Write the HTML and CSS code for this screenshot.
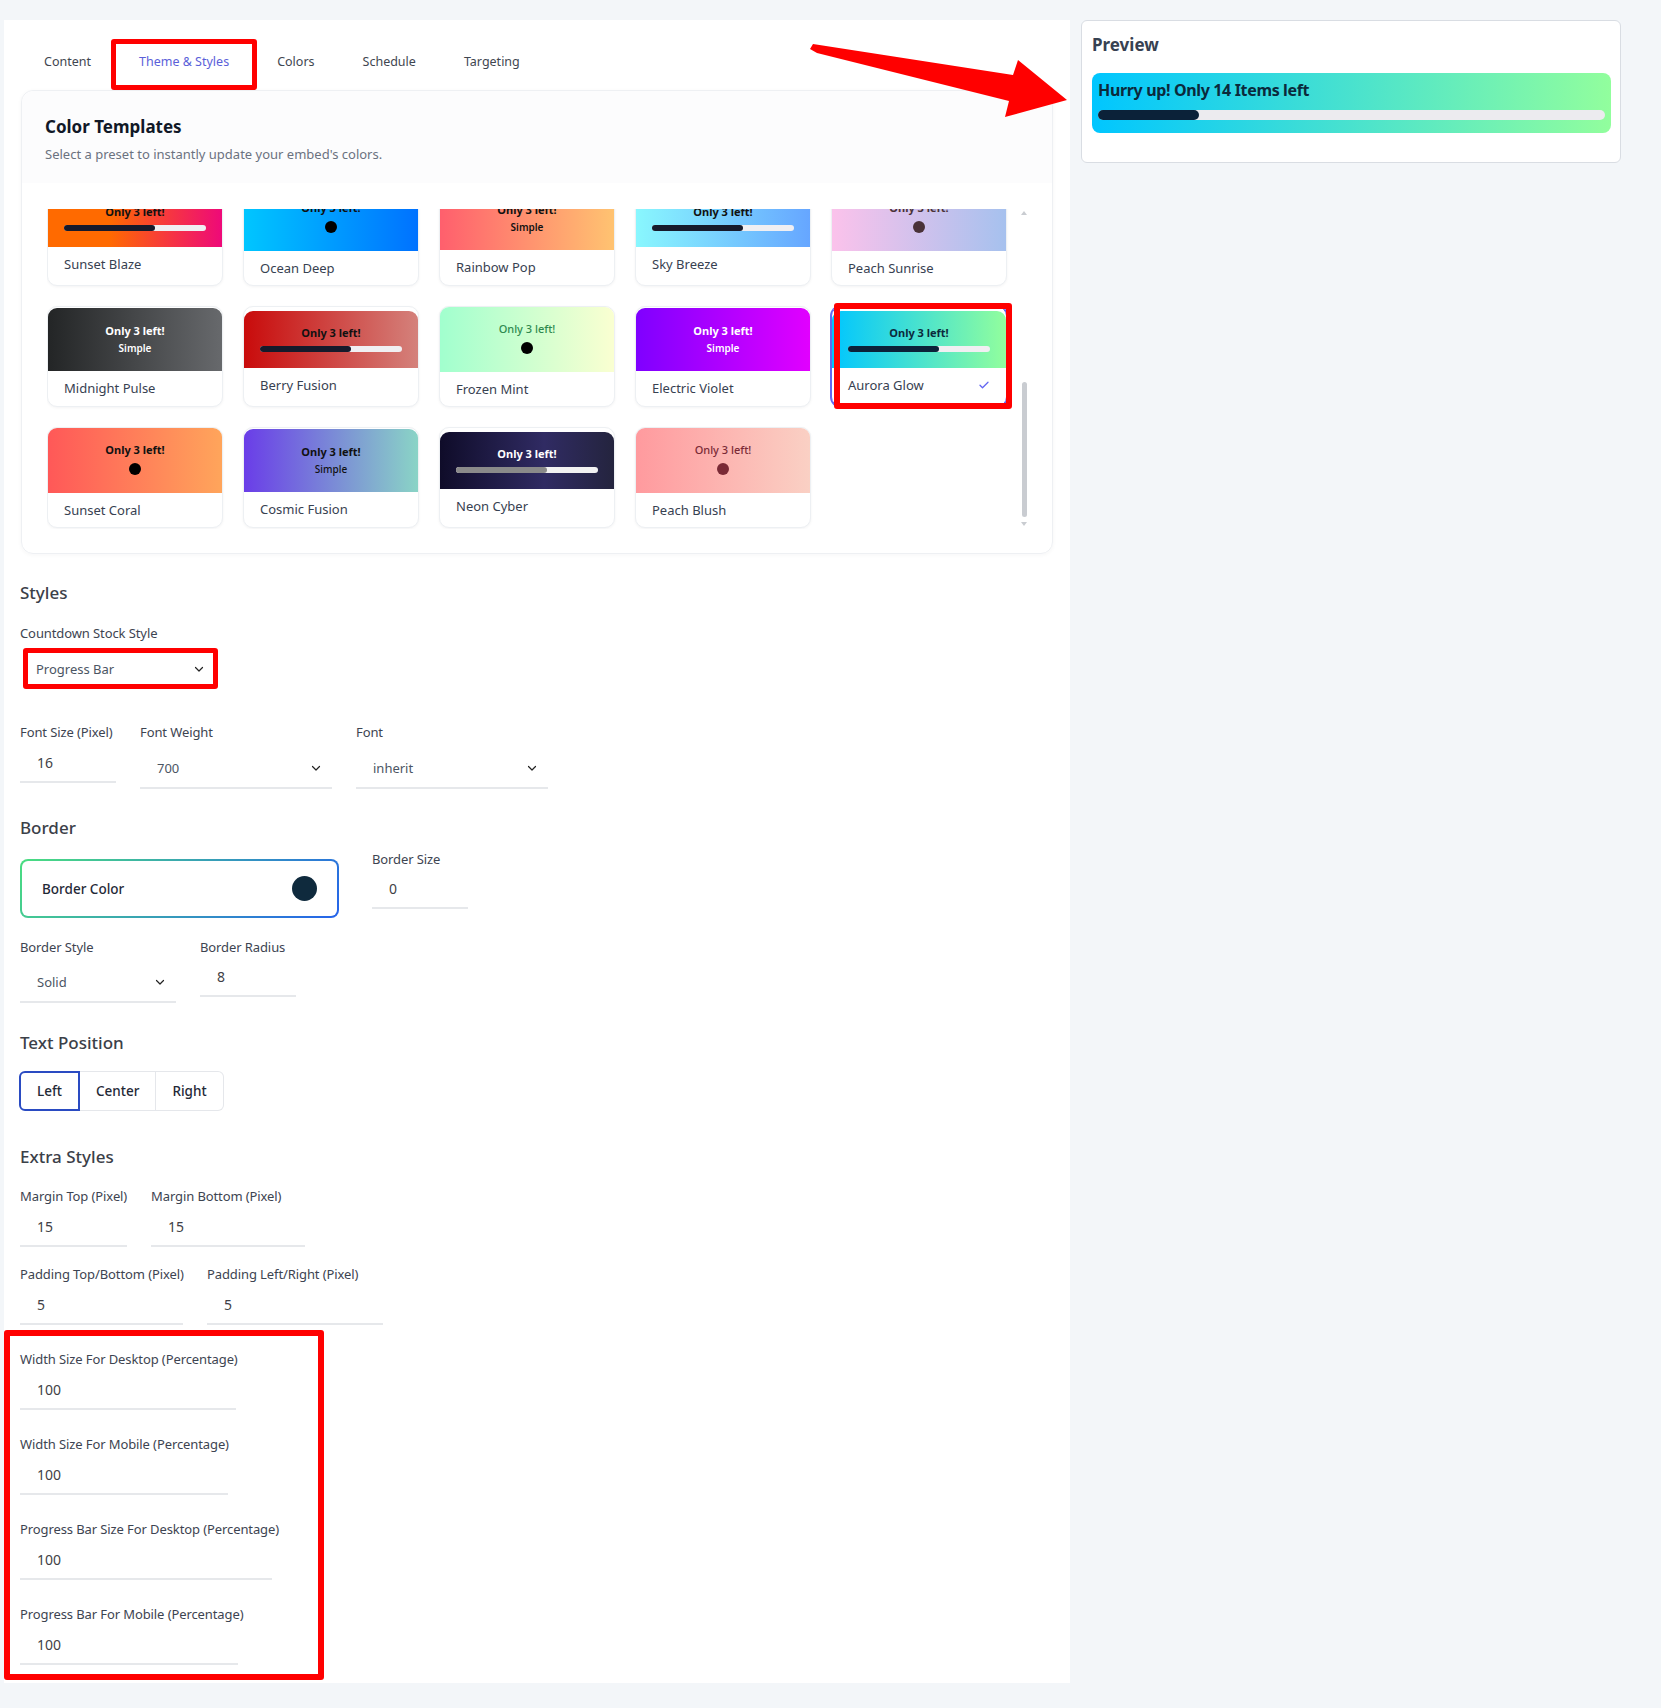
FILE: index.html
```html
<!DOCTYPE html>
<html>
<head>
    <meta charset="utf-8">
    <title>Theme &amp; Styles</title>
    <link rel="stylesheet" href="styles.css">
</head>
<body>
    <div class="page">
        <div class="panel">
            <div class="tabs">
                <div class="tab">Content</div>
                <div class="tab active callout callout-tab">Theme &amp; Styles</div>
                <div class="tab">Colors</div>
                <div class="tab">Schedule</div>
                <div class="tab">Targeting</div>
            </div>

            <div class="templates">
                <div class="templates-head">
                    <h3 class="templates-title">Color Templates</h3>
                    <p class="templates-sub">Select a preset to instantly update your embed's colors.</p>
                </div>
                <div class="tpl-wrap">
                    <div class="tpl-scroll">
                        <div class="tpl-grid">
                            <div class="tpl">
                                <div class="thumb bar t-sunset-blaze"><div class="thumb-text">Only 3 left!</div><div class="track"><div class="fill"></div></div></div>
                                <div class="tpl-name">Sunset Blaze</div>
                            </div>
                            <div class="tpl">
                                <div class="thumb dot t-ocean-deep"><div class="thumb-text">Only 3 left!</div><div class="dot-mark"></div></div>
                                <div class="tpl-name">Ocean Deep</div>
                            </div>
                            <div class="tpl">
                                <div class="thumb simple t-rainbow-pop"><div class="thumb-text">Only 3 left!</div><div class="thumb-sub">Simple</div></div>
                                <div class="tpl-name">Rainbow Pop</div>
                            </div>
                            <div class="tpl">
                                <div class="thumb bar t-sky-breeze"><div class="thumb-text">Only 3 left!</div><div class="track"><div class="fill"></div></div></div>
                                <div class="tpl-name">Sky Breeze</div>
                            </div>
                            <div class="tpl">
                                <div class="thumb dot t-peach-sunrise"><div class="thumb-text">Only 3 left!</div><div class="dot-mark"></div></div>
                                <div class="tpl-name">Peach Sunrise</div>
                            </div>

                            <div class="tpl">
                                <div class="thumb simple t-midnight"><div class="thumb-text">Only 3 left!</div><div class="thumb-sub">Simple</div></div>
                                <div class="tpl-name">Midnight Pulse</div>
                            </div>
                            <div class="tpl">
                                <div class="thumb bar t-berry"><div class="thumb-text">Only 3 left!</div><div class="track"><div class="fill"></div></div></div>
                                <div class="tpl-name">Berry Fusion</div>
                            </div>
                            <div class="tpl">
                                <div class="thumb dot t-frozen-mint"><div class="thumb-text">Only 3 left!</div><div class="dot-mark"></div></div>
                                <div class="tpl-name">Frozen Mint</div>
                            </div>
                            <div class="tpl">
                                <div class="thumb simple t-electric-violet"><div class="thumb-text">Only 3 left!</div><div class="thumb-sub">Simple</div></div>
                                <div class="tpl-name">Electric Violet</div>
                            </div>
                            <div class="tpl selected callout callout-aurora">
                                <div class="thumb bar t-aurora"><div class="thumb-text">Only 3 left!</div><div class="track"><div class="fill"></div></div></div>
                                <div class="tpl-name">Aurora Glow
                                    <svg class="check" width="12" height="12" viewBox="0 0 24 24"><path d="M4 12.5l5 5L20 6.5" fill="none" stroke="#6366f1" stroke-width="2.6" stroke-linecap="round" stroke-linejoin="round"/></svg>
                                </div>
                            </div>

                            <div class="tpl">
                                <div class="thumb dot t-sunset-coral"><div class="thumb-text">Only 3 left!</div><div class="dot-mark"></div></div>
                                <div class="tpl-name">Sunset Coral</div>
                            </div>
                            <div class="tpl">
                                <div class="thumb simple t-cosmic"><div class="thumb-text">Only 3 left!</div><div class="thumb-sub">Simple</div></div>
                                <div class="tpl-name">Cosmic Fusion</div>
                            </div>
                            <div class="tpl">
                                <div class="thumb bar t-neon-cyber"><div class="thumb-text">Only 3 left!</div><div class="track"><div class="fill"></div></div></div>
                                <div class="tpl-name">Neon Cyber</div>
                            </div>
                            <div class="tpl">
                                <div class="thumb dot t-peach-blush"><div class="thumb-text">Only 3 left!</div><div class="dot-mark"></div></div>
                                <div class="tpl-name">Peach Blush</div>
                            </div>
                        </div>
                    </div>
                    <!-- thin scrollbar drawn over the list -->
                    <div class="rail" aria-hidden="true">
                        <span class="rail-up"></span>
                        <span class="rail-thumb"></span>
                        <span class="rail-down"></span>
                    </div>
                </div>
            </div>

            <h2 class="section-title s-styles">Styles</h2>
            <div class="field-label label-stock">Countdown Stock Style</div>
            <div class="select-callout">
                <span>Progress Bar</span>
                <svg class="chev" width="12" height="12" viewBox="0 0 24 24"><path d="M5 9l7 7 7-7" fill="none" stroke="#222" stroke-width="2.4" stroke-linecap="round" stroke-linejoin="round"/></svg>
            </div>

            <div class="form-row row-font">
                <div class="field f-size">
                    <label class="field-label">Font Size (Pixel)</label>
                    <input class="line-input" type="text" value="16">
                </div>
                <div class="field f-weight">
                    <label class="field-label">Font Weight</label>
                    <div class="line-select">
                        <span>700</span>
                        <svg class="chev" width="12" height="12" viewBox="0 0 24 24"><path d="M5 9l7 7 7-7" fill="none" stroke="#222" stroke-width="2.4" stroke-linecap="round" stroke-linejoin="round"/></svg>
                    </div>
                </div>
                <div class="field f-font">
                    <label class="field-label">Font</label>
                    <div class="line-select">
                        <span>inherit</span>
                        <svg class="chev" width="12" height="12" viewBox="0 0 24 24"><path d="M5 9l7 7 7-7" fill="none" stroke="#222" stroke-width="2.4" stroke-linecap="round" stroke-linejoin="round"/></svg>
                    </div>
                </div>
            </div>

            <h2 class="section-title s-border">Border</h2>
            <div class="form-row row-border">
                <div class="color-box">
                    <span>Border Color</span>
                    <span class="swatch"></span>
                </div>
                <div class="field f-bsize">
                    <label class="field-label">Border Size</label>
                    <input class="line-input input-tight" type="text" value="0">
                </div>
            </div>
            <div class="form-row row-style">
                <div class="field f-bstyle">
                    <label class="field-label">Border Style</label>
                    <div class="line-select select-style">
                        <span>Solid</span>
                        <svg class="chev" width="12" height="12" viewBox="0 0 24 24"><path d="M5 9l7 7 7-7" fill="none" stroke="#222" stroke-width="2.4" stroke-linecap="round" stroke-linejoin="round"/></svg>
                    </div>
                </div>
                <div class="field f-bradius">
                    <label class="field-label">Border Radius</label>
                    <input class="line-input input-tight" type="text" value="8">
                </div>
            </div>

            <h2 class="section-title s-position">Text Position</h2>
            <div class="seg">
                <button class="seg-btn active">Left</button>
                <button class="seg-btn">Center</button>
                <button class="seg-btn">Right</button>
            </div>

            <h2 class="section-title s-extra">Extra Styles</h2>
            <div class="form-row row-margin">
                <div class="field f-mt">
                    <label class="field-label">Margin Top (Pixel)</label>
                    <input class="line-input" type="text" value="15">
                </div>
                <div class="field f-mb">
                    <label class="field-label">Margin Bottom (Pixel)</label>
                    <input class="line-input" type="text" value="15">
                </div>
            </div>
            <div class="form-row row-padding">
                <div class="field f-ptb">
                    <label class="field-label">Padding Top/Bottom (Pixel)</label>
                    <input class="line-input" type="text" value="5">
                </div>
                <div class="field f-plr">
                    <label class="field-label">Padding Left/Right (Pixel)</label>
                    <input class="line-input" type="text" value="5">
                </div>
            </div>

            <div class="size-group">
                <div class="field f-wd">
                    <label class="field-label">Width Size For Desktop (Percentage)</label>
                    <input class="line-input" type="text" value="100">
                </div>
                <div class="field f-wm">
                    <label class="field-label">Width Size For Mobile (Percentage)</label>
                    <input class="line-input" type="text" value="100">
                </div>
                <div class="field f-pd">
                    <label class="field-label">Progress Bar Size For Desktop (Percentage)</label>
                    <input class="line-input" type="text" value="100">
                </div>
                <div class="field f-pm">
                    <label class="field-label">Progress Bar For Mobile (Percentage)</label>
                    <input class="line-input" type="text" value="100">
                </div>
            </div>
        </div>

        <div class="preview">
            <h3 class="preview-title">Preview</h3>
            <div class="stock-bar">
                <div class="stock-text">Hurry up! Only 14 Items left</div>
                <div class="stock-track"><div class="stock-fill"></div></div>
            </div>
        </div>
    </div>

    <!-- annotation arrow pointing at the preview -->
    <svg class="arrow" width="1661" height="140" viewBox="0 0 1661 140">
        <polygon points="813,44 1013,75 1018,60 1067,100 1005,117 1009,101 817,53 810,49" fill="#ff0000"/>
    </svg>

    <script src="script.js"></script>
</body>
</html>
```

FILE: styles.css
```css
* {
    box-sizing: border-box;
}
body {
    margin: 0;
    background: #f3f6f9;
    font-family: "Noto Sans", "Open Sans", sans-serif;
    color: #3d4451;
    position: relative;
}
.page {
    display: flex;
    align-items: flex-start;
    gap: 11px;
    padding: 20px 0 0 4px;
}
.panel {
    width: 1066px;
    background: #fff;
    padding: 0 17px 3px 16px;
}

/* red annotation boxes */
.callout {
    position: relative;
}
.callout::after {
    content: "";
    position: absolute;
    border: 5px solid #ff0000;
    border-radius: 3px;
    pointer-events: none;
}
.callout-tab::after {
    top: -4px;
    bottom: -4px;
    left: -4px;
    right: -4px;
}
.callout-aurora::after {
    top: -4px;
    bottom: -3px;
    left: 2px;
    right: -6px;
    border-width: 6px;
}

/* tabs */
.tabs {
    display: flex;
    padding-top: 23px;
}
.tab {
    padding: 10px 24px 15px;
    font-size: 12.5px;
    line-height: 18px;
    color: #3f4650;
}
.tab.active {
    color: #5b5fd9;
}

/* color templates */
.templates {
    margin: 4px 0 0 1px;
    border: 1px solid #eef0f3;
    border-radius: 12px;
    box-shadow: 0 1px 4px rgba(16, 24, 40, 0.04);
}
.templates-head {
    background: #fcfcfd;
    border-radius: 12px 12px 0 0;
    padding: 24px 24px 20px 23px;
}
.templates-title {
    margin: 0;
    font-size: 17px;
    line-height: 24px;
    font-weight: 700;
    color: #111827;
}
.templates-sub {
    margin: 6px 0 0;
    font-size: 13px;
    line-height: 18px;
    color: #6b7280;
}
.tpl-wrap {
    position: relative;
    margin: 26px 25px 24px 25px;
}
.tpl-scroll {
    height: 320px;
    overflow-y: auto;
    scrollbar-width: none;
}
.tpl-scroll::-webkit-scrollbar {
    display: none;
}
.rail {
    position: absolute;
    top: 0;
    right: 0;
    bottom: 0;
    width: 6px;
}
.rail-thumb {
    position: absolute;
    top: 173px;
    left: 1px;
    width: 5px;
    height: 135px;
    border-radius: 3px;
    background: #c9ccd1;
}
.rail-up,
.rail-down {
    position: absolute;
    left: 0;
    width: 0;
    height: 0;
    border-left: 3px solid transparent;
    border-right: 3px solid transparent;
}
.rail-up {
    top: 2px;
    border-bottom: 4px solid #c9ccd1;
}
.rail-down {
    bottom: 3px;
    border-top: 4px solid #c9ccd1;
}
.tpl-grid {
    display: grid;
    grid-template-columns: repeat(5, 176px);
    gap: 20px;
    padding: 4px 0 1px;
}
.tpl {
    display: flex;
    flex-direction: column;
    justify-content: center;
    background: #fff;
    border: 1px solid #edf0f3;
    border-radius: 10px;
    box-shadow: 0 1px 3px rgba(16, 24, 40, 0.05);
}
.tpl.selected {
    border-color: #6366f1;
    box-shadow: 0 0 0 1px #6366f1;
}
.tpl-name {
    display: flex;
    justify-content: space-between;
    align-items: center;
    padding: 8px 16px 8px;
    font-size: 13px;
    line-height: 18px;
    color: #374151;
}
.thumb {
    text-align: center;
    border-radius: 9px 9px 0 0;
    color: #111;
}
.thumb-text {
    font-size: 11px;
    line-height: 15px;
    font-weight: 700;
}
.thumb.bar {
    padding: 14px 16px 16px;
}
.thumb.dot {
    padding: 14px 16px 18px;
}
.thumb.simple {
    padding: 15px 16px 16px;
}
.track {
    margin-top: 6px;
    height: 6px;
    border-radius: 3px;
    background: #f0eff2;
    text-align: left;
}
.fill {
    width: 64%;
    height: 100%;
    border-radius: 3px;
    background: #161a2b;
}
.dot-mark {
    width: 12px;
    height: 12px;
    margin: 6px auto 0;
    border-radius: 50%;
    background: #000;
}
.thumb-sub {
    margin-top: 4px;
    font-size: 10px;
    line-height: 13px;
    font-weight: 600;
}

.t-sunset-blaze { background: linear-gradient(90deg, #ff6a00 35%, #ee0979); }
.t-ocean-deep { background: linear-gradient(90deg, #00c6ff, #0072ff); }
.t-rainbow-pop { background: linear-gradient(90deg, #ff5f6d, #ffc371); }
.t-sky-breeze { background: linear-gradient(90deg, #89f7fe, #66a6ff); }
.t-peach-sunrise { background: linear-gradient(90deg, #fbc2eb, #a6c1ee); color: #4a3238; }
.t-peach-sunrise .dot-mark { background: #4a3238; }
.t-midnight { background: linear-gradient(90deg, #232526, #67696c); color: #fff; }
.t-berry { background: linear-gradient(90deg, #c90b0b, #d4817b); }
.t-frozen-mint { background: linear-gradient(90deg, #a1ffce, #faffd1); color: #2f8a4f; }
.t-frozen-mint .thumb-text { font-weight: 500; }
.t-electric-violet { background: linear-gradient(90deg, #7f00ff, #e100ff); color: #fff; }
.t-aurora { background: linear-gradient(90deg, #00c6ff, #92fe9d); color: #0b2a3c; }
.t-aurora .fill { background: #0b2239; }
.t-sunset-coral { background: linear-gradient(90deg, #ff5858, #ffa55b); }
.t-cosmic { background: linear-gradient(90deg, #6a3de8, #8ad4c6); }
.t-cosmic .thumb-sub { font-weight: 500; }
.t-neon-cyber { background: linear-gradient(90deg, #0f0c29, #302b63 60%, #24243e); color: #fff; }
.t-neon-cyber .track { background: #f2f2f2; }
.t-neon-cyber .fill { background: #8a8a8a; }
.t-peach-blush { background: linear-gradient(90deg, #ff9a9e, #fad0c4); color: #7a2a36; }
.t-peach-blush .thumb-text { font-weight: 500; }
.t-peach-blush .dot-mark { background: #7a2a36; }

/* form */
.section-title {
    margin: 0;
    font-size: 17px;
    line-height: 24px;
    font-weight: 500;
    color: #3b4048;
}
.s-styles { margin-top: 27px; }
.s-border { margin-top: 27px; }
.s-position { margin-top: 28px; }
.s-extra { margin-top: 34px; }

.field-label {
    display: block;
    font-size: 13px;
    line-height: 18px;
    letter-spacing: -0.1px;
    color: #3d4451;
    white-space: nowrap;
}
.label-stock {
    margin-top: 19px;
}
.select-callout {
    display: flex;
    align-items: center;
    justify-content: space-between;
    width: 195px;
    height: 41px;
    margin: 6px 0 0 3px;
    padding: 0 8px 0 8px;
    border: 5px solid #ff0000;
    border-radius: 3px;
    font-size: 13px;
    color: #4b5563;
}
.form-row {
    display: flex;
    align-items: flex-start;
    gap: 24px;
}
.row-font { margin-top: 34px; }
.row-border { margin-top: 10px; gap: 33px; }
.row-style { margin-top: 20px; }
.row-margin { margin-top: 18px; }
.row-padding { margin-top: 18px; }

.field {
    display: flex;
    flex-direction: column;
}
.line-input {
    width: 100%;
    height: 40px;
    margin-top: 2px;
    padding: 0 17px;
    border: none;
    border-bottom: 2px solid #e6e8eb;
    background: transparent;
    font-family: inherit;
    font-size: 14px;
    color: #3f3f46;
    outline: none;
}
.input-tight {
    margin-top: 1px;
}
.line-select {
    display: flex;
    align-items: center;
    justify-content: space-between;
    height: 40px;
    margin-top: 8px;
    padding: 0 10px 0 17px;
    border-bottom: 2px solid #e6e8eb;
    font-size: 13px;
    color: #4b5563;
}
.select-style {
    margin-top: 7px;
}
.f-size { width: 96px; }
.f-weight { width: 192px; }
.f-font { width: 192px; }
.f-bsize { width: 96px; }
.f-bstyle { width: 156px; }
.f-bradius { width: 96px; }
.f-mt { width: 107px; }
.f-mb { width: 154px; }
.f-ptb { width: 163px; }
.f-plr { width: 176px; }
.f-wd { width: 216px; }
.f-wm { width: 208px; }
.f-pd { width: 252px; }
.f-pm { width: 218px; }

.color-box {
    display: flex;
    align-items: center;
    justify-content: space-between;
    width: 319px;
    height: 59px;
    margin-top: 9px;
    padding: 0 20px;
    border: 2px solid transparent;
    border-radius: 8px;
    background: linear-gradient(#fff, #fff) padding-box, linear-gradient(135deg, #4ade80, #2563eb) border-box;
    font-size: 13.5px;
    font-weight: 500;
    color: #1f2937;
}
.swatch {
    width: 25px;
    height: 25px;
    border-radius: 50%;
    background: #0f2a3d;
}

.seg {
    display: inline-flex;
    margin: 16px 0 0 -1px;
}
.seg-btn {
    height: 40px;
    padding: 0 16px;
    border: 1px solid #e5e7eb;
    background: #fff;
    font-family: inherit;
    font-size: 13.5px;
    font-weight: 500;
    color: #1f2937;
}
.seg-btn + .seg-btn {
    border-left: none;
}
.seg-btn:first-child {
    border-radius: 6px 0 0 6px;
}
.seg-btn:last-child {
    border-radius: 0 6px 6px 0;
}
.seg-btn.active {
    border: 2px solid #2a4bc2;
}

.size-group {
    display: flex;
    flex-direction: column;
    gap: 25px;
    width: 320px;
    margin: 5px 0 0 -16px;
    padding: 14px 10px 9px;
    border: 6px solid #ff0000;
    border-radius: 3px;
}

/* preview */
.preview {
    width: 540px;
    padding: 12px 9px 29px 10px;
    background: #fff;
    border: 1px solid #d9dde3;
    border-radius: 6px;
}
.preview-title {
    margin: 0;
    font-size: 17px;
    line-height: 24px;
    font-weight: 700;
    color: #374151;
}
.stock-bar {
    margin-top: 16px;
    padding: 5px 6px;
    border-radius: 8px;
    background: linear-gradient(90deg, #00c6ff, #92fe9d);
}
.stock-text {
    font-size: 16px;
    line-height: 24px;
    font-weight: 700;
    letter-spacing: -0.35px;
    color: #0b2a3c;
}
.stock-track {
    height: 10px;
    margin: 8px 0;
    border-radius: 5px;
    background: #ecebef;
}
.stock-fill {
    width: 20%;
    height: 100%;
    border-radius: 5px;
    background: #0b2239;
}

.arrow {
    position: absolute;
    top: 0;
    left: 0;
    pointer-events: none;
}
```

FILE: script.js
```js
// the template list is shown scrolled to its last row
var list = document.querySelector('.tpl-scroll');
list.scrollTop = list.scrollHeight;
```
